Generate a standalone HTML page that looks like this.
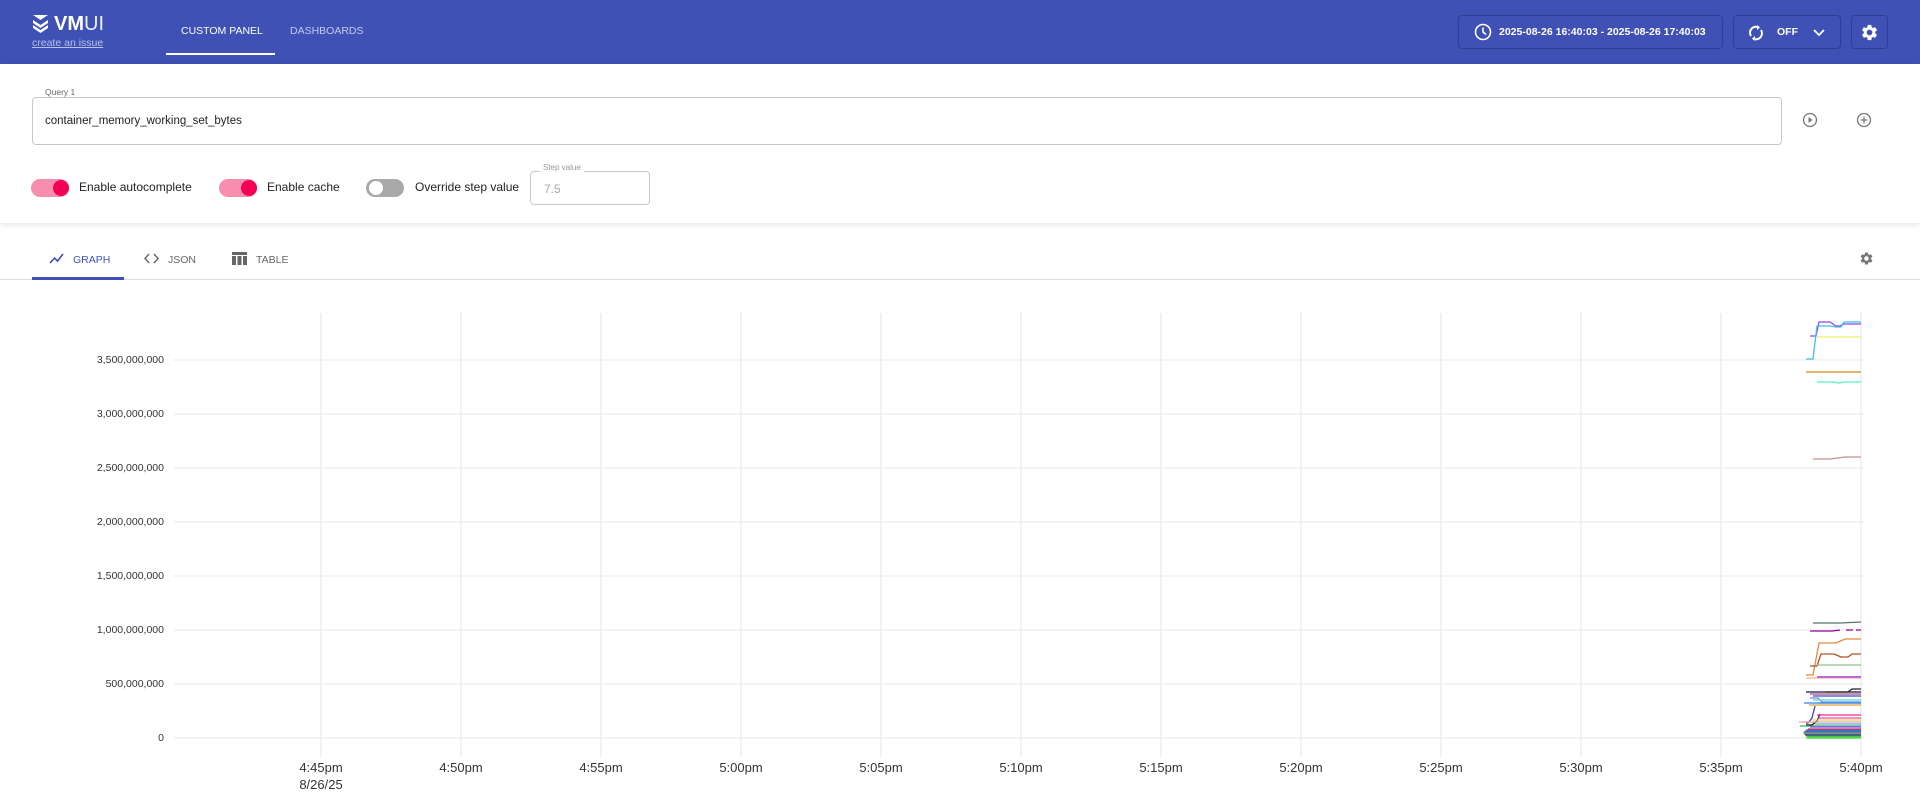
<!DOCTYPE html>
<html><head><meta charset="utf-8"><style>
*{margin:0;padding:0;box-sizing:border-box}
body{width:1920px;height:793px;background:#fff;font-family:"Liberation Sans",sans-serif;position:relative;overflow:hidden;color:#000}
.a{position:absolute;white-space:nowrap}
.hdr{left:0;top:0;width:1920px;height:64px;background:#3f51b5}
.btn{border:1px solid #2f3e94;border-radius:4px;height:34px;top:15px;color:#fff;font-size:10.5px;font-weight:bold}
.tog{width:38px;height:18px;border-radius:9px}
.lbl{font-size:12px;color:#222}
.tab{font-size:10.5px;top:254px;color:#666}
.yl{font-size:10.5px;color:#333;text-align:right;width:150px;left:14px}
.xl{font-size:13px;color:#333;width:80px;text-align:center;top:760px}
</style></head><body>
<div class="a hdr"></div>
<svg class="a" style="left:32px;top:14px" width="17" height="19" viewBox="0 0 17 19"><path d="M1 1h15l-7.5 5z" fill="#fff"/><path d="M1 6l7.5 5 7.5-5v3l-7.5 5-7.5-5z" fill="#fff"/><path d="M1 11l7.5 5 7.5-5v3l-7.5 5-7.5-5z" fill="#fff"/></svg>
<div class="a" style="left:54px;top:13px;color:#fff;font-size:20px"><b>VM</b><span style="font-weight:300;opacity:.9">UI</span></div>
<div class="a" style="left:32px;top:37px;color:#b8c0ee;font-size:10.5px;text-decoration:underline">create an issue</div>
<div class="a" style="left:181px;top:25px;color:#fff;font-size:10.5px">CUSTOM PANEL</div>
<div class="a" style="left:166px;top:53px;width:109px;height:2px;background:#fff"></div>
<div class="a" style="left:290px;top:25px;color:#c5cbee;font-size:10.5px">DASHBOARDS</div>
<div class="a btn" style="left:1458px;width:265px"><svg class="a" style="left:15px;top:7px" width="18" height="18" viewBox="0 0 18 18"><circle cx="9" cy="9" r="7.5" fill="none" stroke="#fff" stroke-width="1.6"/><path d="M9 4.5V9l3 2.5" fill="none" stroke="#fff" stroke-width="1.6"/></svg><span class="a" style="left:40px;top:10px">2025-08-26 16:40:03 - 2025-08-26 17:40:03</span></div>
<div class="a btn" style="left:1733px;width:108px"><svg class="a" style="left:14px;top:8px" width="16" height="18" viewBox="0 0 16 18"><path d="M3 12a6 6 0 0 1 8-8.5M13 6a6 6 0 0 1-8 8.5" fill="none" stroke="#fff" stroke-width="2"/><path d="M9 1l3 2.5-3 2.5zM7 12l-3 2.5 3 2.5z" fill="#fff"/></svg><span class="a" style="left:43px;top:10px">OFF</span><svg class="a" style="left:79px;top:12px" width="12" height="9" viewBox="0 0 12 9"><path d="M1 2l5 5 5-5" fill="none" stroke="#fff" stroke-width="1.8"/></svg></div>
<div class="a btn" style="left:1851px;width:37px"><svg class="a" style="left:8px;top:7px" width="19" height="19" viewBox="0 0 24 24"><path fill="#fff" d="M19.14 12.94c.04-.3.06-.61.06-.94 0-.32-.02-.64-.07-.94l2.03-1.58a.49.49 0 0 0 .12-.61l-1.92-3.32a.49.49 0 0 0-.59-.22l-2.39.96c-.5-.38-1.030-.7-1.62-.94l-.36-2.54a.48.48 0 0 0-.48-.41h-3.84c-.24 0-.43.17-.47.41l-.36 2.54c-.59.24-1.13.57-1.62.94l-2.39-.96a.48.48 0 0 0-.59.22L2.74 8.87c-.12.21-.08.47.12.61l2.03 1.58c-.05.3-.09.63-.09.94s.02.64.07.94l-2.03 1.58a.49.49 0 0 0-.12.61l1.92 3.32c.12.22.37.29.59.22l2.39-.96c.5.38 1.03.7 1.62.94l.36 2.54c.05.24.24.41.48.41h3.84c.24 0 .44-.17.47-.41l.36-2.54c.59-.24 1.13-.56 1.62-.94l2.39.96c.22.08.47 0 .59-.22l1.92-3.32c.12-.22.07-.47-.12-.61l-2.01-1.58zM12 15.6A3.6 3.6 0 1 1 12 8.4a3.6 3.6 0 0 1 0 7.2z"/></svg></div>

<div class="a" style="left:0;top:64px;width:1920px;height:159px;background:#fff;box-shadow:0 2px 6px rgba(0,0,0,.1)"></div>
<div class="a" style="left:32px;top:97px;width:1750px;height:48px;border:1px solid #c8c8c8;border-radius:4px"></div>
<div class="a" style="left:41px;top:87px;background:#fff;padding:0 4px;font-size:8.5px;color:#666">Query 1</div>
<div class="a" style="left:45px;top:115px;font-size:11.5px;color:#222">container_memory_working_set_bytes</div>
<svg class="a" style="left:1802px;top:112px" width="16" height="16" viewBox="0 0 16 16"><circle cx="8" cy="8" r="6.5" fill="none" stroke="#777" stroke-width="1.3"/><path d="M6.5 5v6l4-3z" fill="#777"/></svg>
<svg class="a" style="left:1856px;top:112px" width="16" height="16" viewBox="0 0 16 16"><circle cx="8" cy="8" r="6.5" fill="none" stroke="#777" stroke-width="1.3"/><path d="M8 4.5v7M4.5 8h7" stroke="#777" stroke-width="1.3"/></svg>

<div class="a tog" style="left:31px;top:179px;background:#f78ead"></div><div class="a" style="left:53px;top:180px;width:16px;height:16px;border-radius:50%;background:#f50057"></div>
<div class="a lbl" style="left:79px;top:180px">Enable autocomplete</div>
<div class="a tog" style="left:219px;top:179px;background:#f78ead"></div><div class="a" style="left:241px;top:180px;width:16px;height:16px;border-radius:50%;background:#f50057"></div>
<div class="a lbl" style="left:267px;top:180px">Enable cache</div>
<div class="a tog" style="left:366px;top:179px;background:#a8a8a8"></div><div class="a" style="left:369px;top:181px;width:14px;height:14px;border-radius:50%;background:#fff"></div>
<div class="a lbl" style="left:415px;top:180px">Override step value</div>
<div class="a" style="left:530px;top:171px;width:120px;height:34px;border:1px solid #c8c8c8;border-radius:4px"></div>
<div class="a" style="left:540px;top:163px;background:#fff;padding:0 3px;font-size:8px;color:#999">Step value</div>
<div class="a" style="left:544px;top:182px;font-size:12px;color:#aaa">7.5</div>

<svg class="a" style="left:49px;top:252px" width="15" height="12" viewBox="0 0 15 12"><path d="M1 11l4.5-5 3 3L14 2" fill="none" stroke="#3f51b5" stroke-width="1.6"/></svg>
<div class="a tab" style="left:73px;color:#3f51b5">GRAPH</div>
<svg class="a" style="left:144px;top:253px" width="15" height="11" viewBox="0 0 15 11"><path d="M5 1L1 5.5 5 10M10 1l4 4.5-4 4.5" fill="none" stroke="#666" stroke-width="1.4"/></svg>
<div class="a tab" style="left:168px">JSON</div>
<svg class="a" style="left:232px;top:252px" width="15" height="13" viewBox="0 0 15 13"><path d="M0 0h15v3H0zM0 4h4v9H0zM5.5 4h4v9h-4zM11 4h4v9h-4z" fill="#666"/></svg>
<div class="a tab" style="left:256px">TABLE</div>
<div class="a" style="left:0;top:279px;width:1920px;height:1px;background:#ddd"></div>
<div class="a" style="left:32px;top:277px;width:92px;height:3px;background:#3f51b5"></div>
<svg class="a" style="left:1859px;top:251px" width="15" height="15" viewBox="0 0 24 24"><path fill="#777" d="M19.14 12.94c.04-.3.06-.61.06-.94 0-.32-.02-.64-.07-.94l2.03-1.58a.49.49 0 0 0 .12-.61l-1.92-3.32a.49.49 0 0 0-.59-.22l-2.39.96c-.5-.38-1.03-.7-1.62-.94l-.36-2.54a.48.48 0 0 0-.48-.41h-3.84c-.24 0-.43.17-.47.41l-.36 2.54c-.59.24-1.13.57-1.62.94l-2.39-.96a.48.48 0 0 0-.59.22L2.74 8.87c-.12.21-.08.47.12.61l2.03 1.58c-.05.3-.09.63-.09.94s.02.64.07.94l-2.03 1.58a.49.49 0 0 0-.12.61l1.92 3.32c.12.22.37.29.59.22l2.39-.96c.5.38 1.03.7 1.62.94l.36 2.54c.05.24.24.41.48.41h3.84c.24 0 .44-.17.47-.41l.36-2.54c.59-.24 1.13-.56 1.62-.94l2.39.96c.22.08.47 0 .59-.22l1.92-3.32c.12-.22.07-.47-.12-.61l-2.01-1.58zM12 15.6A3.6 3.6 0 1 1 12 8.4a3.6 3.6 0 0 1 0 7.2z"/></svg>

<svg class="a" style="left:0;top:0" width="1920" height="793">
<g stroke="#ececec" stroke-width="1.3">
<path d="M174 360H1864M174 414H1864M174 468H1864M174 522H1864M174 576H1864M174 630H1864M174 684H1864M174 738H1864"/>
<path d="M321 313V757M461 313V757M601 313V757M741 313V757M881 313V757M1021 313V757M1161 313V757M1301 313V757M1441 313V757M1581 313V757M1721 313V757M1861 313V757"/>
</g>
<g fill="none" stroke-width="1.3">
<path d="M1810 336H1816L1819 322H1830L1836 326H1840L1844 324H1861" stroke="#8e44f0"/>
<path d="M1806 359H1813L1817 326H1830L1836 327H1841L1844 322H1861" stroke="#3ec0e8"/>
<path d="M1817 337H1861" stroke="#f0f060"/>
<path d="M1806 372H1861" stroke="#d08a10"/>
<path d="M1817 382H1833L1839 383L1845 382H1861" stroke="#50f0c0"/>
<path d="M1813 459H1830L1845 457H1861" stroke="#c09090"/>
<path d="M1813 623H1840L1861 622" stroke="#557766"/>
<path d="M1810 631H1832L1840 630M1846 630H1853M1856 630H1861" stroke="#990099"/>
<path d="M1806 675H1813L1819 643H1836L1845 639H1861" stroke="#e08a40"/>
<path d="M1810 666H1817L1821 654H1834L1841 657H1848L1852 654H1861" stroke="#b05020"/>
<path d="M1817 665H1861" stroke="#90c090"/>
<path d="M1817 677H1861" stroke="#8800ff"/>
<path d="M1806 678H1861" stroke="#f0b090"/>
<path d="M1806 692H1861" stroke="#101060"/>
<path d="M1825 692H1848L1852 689H1861" stroke="#202020"/>
<path d="M1810 694H1861" stroke="#b05050"/>
<path d="M1813 696H1861" stroke="#4444dd"/>
<path d="M1810 698H1818L1822 702H1861" stroke="#8888dd"/>
<path d="M1813 700H1861" stroke="#40e0d0"/>
<path d="M1817 703H1861" stroke="#80c0c0"/>
<path d="M1804 703H1861" stroke="#3080f0"/>
<path d="M1809 705H1861" stroke="#e0a040"/>
<path d="M1815 706L1812 718L1808 723H1806" stroke="#4040c0"/>
<path d="M1820 714L1817 721L1812 725H1806" stroke="#101010"/>
<path d="M1817 715H1861" stroke="#e03090"/>
<path d="M1818 718H1861" stroke="#ff40c0"/>
<path d="M1812 720H1861" stroke="#d0e050"/>
<path d="M1799 722H1861" stroke="#f0a0a0"/>
<path d="M1815 724H1861" stroke="#60a0f0"/>
<path d="M1800 726H1861" stroke="#20c060"/>
<path d="M1810 727H1861" stroke="#a040f0"/>
<path d="M1808 729H1861" stroke="#ff2020"/>
<path d="M1806 730H1861" stroke="#2060ff"/>
<path d="M1805 731H1861" stroke="#20a0a0"/>
<path d="M1804 732H1861" stroke="#8030c0"/>
<path d="M1803 733H1861" stroke="#30c0c0"/>
<path d="M1804 734H1861" stroke="#e06020"/>
<path d="M1805 735H1861" stroke="#2040d0"/>
<path d="M1806 736H1861" stroke="#10a040"/>
<path d="M1808 737H1861" stroke="#60e040"/>
<path d="M1806 738H1861" stroke="#40d040"/>
</g>
</svg>
<div class="a yl" style="top:354px">3,500,000,000</div>
<div class="a yl" style="top:408px">3,000,000,000</div>
<div class="a yl" style="top:462px">2,500,000,000</div>
<div class="a yl" style="top:516px">2,000,000,000</div>
<div class="a yl" style="top:570px">1,500,000,000</div>
<div class="a yl" style="top:624px">1,000,000,000</div>
<div class="a yl" style="top:678px">500,000,000</div>
<div class="a yl" style="top:732px">0</div>
<div class="a xl" style="left:281px">4:45pm</div>
<div class="a xl" style="left:281px;top:777px">8/26/25</div>
<div class="a xl" style="left:421px">4:50pm</div>
<div class="a xl" style="left:561px">4:55pm</div>
<div class="a xl" style="left:701px">5:00pm</div>
<div class="a xl" style="left:841px">5:05pm</div>
<div class="a xl" style="left:981px">5:10pm</div>
<div class="a xl" style="left:1121px">5:15pm</div>
<div class="a xl" style="left:1261px">5:20pm</div>
<div class="a xl" style="left:1401px">5:25pm</div>
<div class="a xl" style="left:1541px">5:30pm</div>
<div class="a xl" style="left:1681px">5:35pm</div>
<div class="a xl" style="left:1821px">5:40pm</div>
</body></html>
